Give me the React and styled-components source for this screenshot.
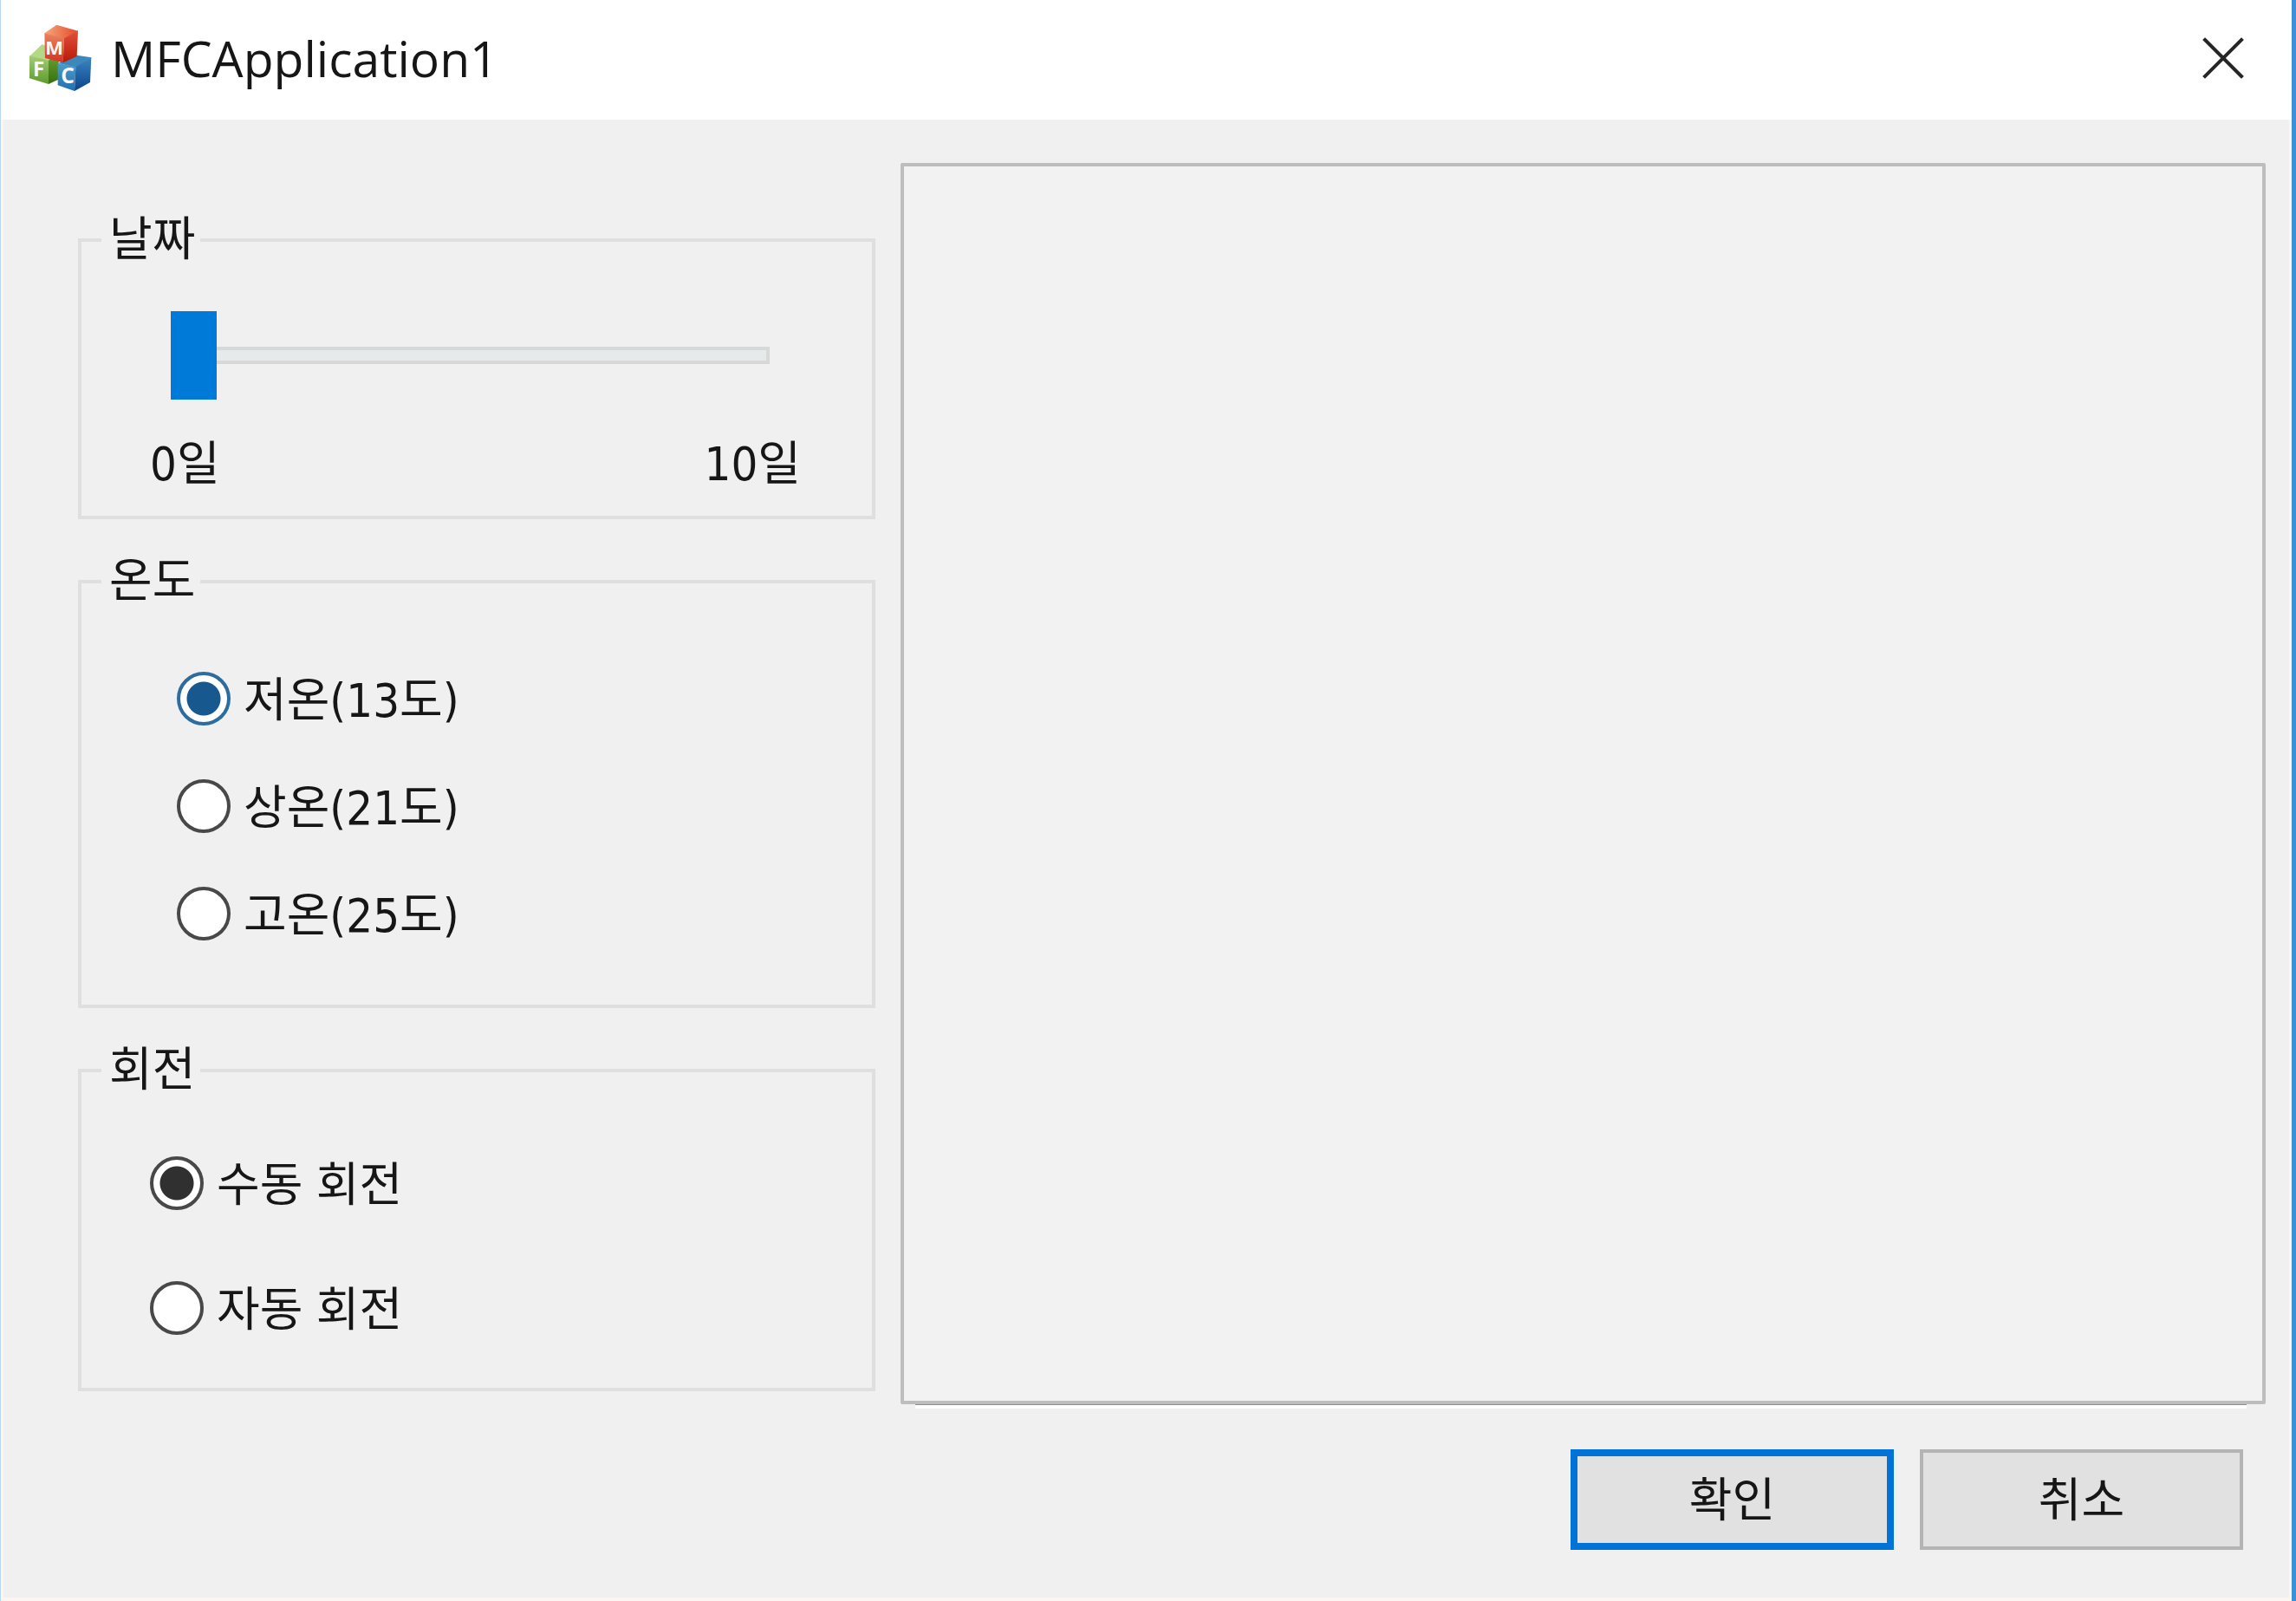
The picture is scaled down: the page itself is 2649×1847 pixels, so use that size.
import React, { useState } from "react";
import styled, { createGlobalStyle } from "styled-components";

const GlobalStyle = createGlobalStyle`
  *, *::before, *::after { box-sizing: border-box; }
  body {
    margin: 0;
    background: #f0f0f0;
    color: #161616;
    font-family: "DejaVu Sans Condensed", "Noto Sans CJK KR", sans-serif;
    font-size: 54px;
  }
`;

const Window = styled.div`
  min-height: 100vh;
  display: flex;
  flex-direction: column;
  border-left: 1px solid #b9d8f5;
  border-right: 5px solid #3a91da;
`;

const TitleBar = styled.header`
  height: 138px;
  display: flex;
  align-items: center;
  gap: 16px;
  padding: 0 29px 4px 27px;
  background: #ffffff;
`;

const Title = styled.h1`
  flex: 1;
  margin: 0;
  font-family: "Open Sans", "Noto Sans", sans-serif;
  font-size: 57px;
  font-weight: 400;
  line-height: 76px;
`;

const CloseButton = styled.button`
  display: flex;
  align-items: center;
  justify-content: center;
  width: 100px;
  height: 100px;
  padding: 0;
  border: 0;
  background: none;
`;

const Client = styled.main`
  flex: 1;
  display: flex;
  flex-direction: column;
  padding-top: 50px;
  background: #f0f0f0;
  border: solid #fcf6ee;
  border-width: 0 3px 4px;
`;

const Columns = styled.div`
  display: grid;
  grid-template-columns: minmax(0, 920fr) minmax(0, 1575fr);
  gap: 29px;
  padding: 0 27px 0 86px;
`;

const Settings = styled.div`
  display: flex;
  flex-direction: column;
  gap: 40px;
  padding: 57px 0 15px;
`;

const Group = styled.fieldset`
  min-width: 0;
  margin: 0;
  padding: 0;
  border: 4px solid #dfdfdf;
`;

const GroupTitle = styled.legend`
  margin-left: 23px;
  padding: 0 6px 0 9px;
  line-height: 64px;
`;

const SliderArea = styled.div`
  padding: 50px 118px 0 103px;
`;

const Slider = styled.input`
  appearance: none;
  display: block;
  width: 100%;
  height: 102px;
  margin: 0;
  background: none;

  &::-webkit-slider-runnable-track {
    height: 20px;
    background: #e7eaea;
    box-shadow: inset 0 0 0 4px #d7d9d9;
  }

  &::-webkit-slider-thumb {
    appearance: none;
    width: 53px;
    height: 102px;
    margin-top: -41px;
    border-radius: 0;
    background: #007ad9;
  }
`;

const Range = styled.div`
  display: flex;
  justify-content: space-between;
  padding: 40px 82px 30px 79px;
`;

const Caption = styled.span`
  padding-top: 6px;
  line-height: 58px;
`;

const Options = styled.div`
  display: flex;
  flex-direction: column;
  align-items: flex-start;
  gap: ${(p) => p.$gap}px;
  padding: ${(p) => p.$padding};
`;

const Option = styled.label`
  display: flex;
  align-items: center;
  gap: 15px;
`;

const Radio = styled.input`
  appearance: none;
  width: 62px;
  height: 62px;
  margin: 0;
  border: 4px solid ${(p) => (p.$accent && p.checked ? "#2c6c9f" : "#484848")};
  border-radius: 50%;
  background: #ffffff;

  &:checked {
    background: radial-gradient(
      circle,
      ${(p) => (p.$accent ? "#17588f" : "#303030")} 19px,
      #ffffff 20px
    );
  }
`;

const Canvas = styled.section`
  position: relative;
  border: 4px solid #bdbdbd;
  border-radius: 2px;
  background: #f2f2f2;

  &::after {
    content: "";
    position: absolute;
    top: calc(100% + 4px);
    left: 13px;
    right: 18px;
    height: 5px;
    border-top: 1px solid #8f8f8f;
    background: #ffffff;
  }
`;

const Actions = styled.footer`
  display: flex;
  justify-content: flex-end;
  gap: 30px;
  padding: 52px 53px 48px;
`;

const Button = styled.button`
  width: 373px;
  height: 116px;
  padding: 4px 0 0;
  border: ${(p) => (p.$primary ? "8px solid #0072d8" : "4px solid #b4b4b4")};
  background: #e1e1e1;
  color: inherit;
  font: inherit;
  line-height: 64px;
`;

function AppIcon() {
  return (
    <svg width="84" height="88" viewBox="0 0 252 264" aria-hidden="true">
      <defs>
        <linearGradient id="redTop" x1="0" y1="0" x2="1" y2="0">
          <stop offset="0" stopColor="#f6a878" />
          <stop offset="1" stopColor="#e2492c" />
        </linearGradient>
        <linearGradient id="redFront" x1="0" y1="0" x2="0" y2="1">
          <stop offset="0" stopColor="#ec8460" />
          <stop offset="1" stopColor="#d43320" />
        </linearGradient>
        <linearGradient id="redSide" x1="0" y1="0" x2="0" y2="1">
          <stop offset="0" stopColor="#e0503a" />
          <stop offset="1" stopColor="#b81808" />
        </linearGradient>
        <linearGradient id="greenFront" x1="0" y1="0" x2="0" y2="1">
          <stop offset="0" stopColor="#a4cc78" />
          <stop offset="1" stopColor="#5c9a2c" />
        </linearGradient>
        <linearGradient id="greenSide" x1="0" y1="0" x2="0" y2="1">
          <stop offset="0" stopColor="#6ba53a" />
          <stop offset="1" stopColor="#36700f" />
        </linearGradient>
        <linearGradient id="blueFront" x1="0" y1="0" x2="0" y2="1">
          <stop offset="0" stopColor="#4a9ccc" />
          <stop offset="1" stopColor="#2270b0" />
        </linearGradient>
        <linearGradient id="blueSide" x1="0" y1="0" x2="0" y2="1">
          <stop offset="0" stopColor="#3b86bf" />
          <stop offset="1" stopColor="#0b438c" />
        </linearGradient>
      </defs>
      <path d="M18 126 L62 84 L116 110 L84 142 Z" fill="#b4d884" />
      <path d="M18 124 L84 140 L84 222 L18 202 Z" fill="url(#greenFront)" />
      <path d="M84 140 L120 112 L118 206 L84 222 Z" fill="url(#greenSide)" />
      <path d="M118 150 L166 120 L232 130 L178 164 Z" fill="#3b88bd" />
      <path d="M116 150 L178 162 L174 246 L116 226 Z" fill="url(#blueFront)" />
      <path d="M178 162 L232 129 L228 216 L174 246 Z" fill="url(#blueSide)" />
      <path d="M70 46 L112 17 L186 38 L138 66 Z" fill="url(#redTop)" />
      <path d="M70 45 L138 64 L134 148 L72 132 Z" fill="url(#redFront)" />
      <path d="M138 64 L186 37 L182 126 L134 148 Z" fill="url(#redSide)" />
      <g
        fill="#fff8f2"
        fontFamily="Open Sans, sans-serif"
        fontWeight="700"
        textAnchor="middle"
      >
        <text x="104" y="120" fontSize="66">M</text>
        <text x="50" y="194" fontSize="72">F</text>
        <text x="150" y="218" fontSize="74">C</text>
      </g>
    </svg>
  );
}

function CloseIcon() {
  return (
    <svg width="48" height="48" viewBox="0 0 48 48" aria-hidden="true">
      <path
        d="M3 3 L45 45 M45 3 L3 45"
        stroke="#262626"
        strokeWidth="4"
        strokeLinecap="square"
      />
    </svg>
  );
}

function RadioGroup({ title, name, options, accent, gap, padding }) {
  const [selected, setSelected] = useState(options[0]);
  return (
    <Group>
      <GroupTitle>{title}</GroupTitle>
      <Options $gap={gap} $padding={padding}>
        {options.map((option) => (
          <Option key={option}>
            <Radio
              type="radio"
              name={name}
              $accent={accent}
              checked={selected === option}
              onChange={() => setSelected(option)}
            />
            <Caption>{option}</Caption>
          </Option>
        ))}
      </Options>
    </Group>
  );
}

export default function App() {
  const [day, setDay] = useState(0);
  return (
    <>
      <GlobalStyle />
      <Window>
        <TitleBar>
          <AppIcon />
          <Title>MFCApplication1</Title>
          <CloseButton type="button" aria-label="닫기">
            <CloseIcon />
          </CloseButton>
        </TitleBar>
        <Client>
          <Columns>
            <Settings>
              <Group>
                <GroupTitle id="day-title">날짜</GroupTitle>
                <SliderArea>
                  <Slider
                    type="range"
                    min="0"
                    max="10"
                    value={day}
                    aria-labelledby="day-title"
                    onChange={(e) => setDay(Number(e.target.value))}
                  />
                </SliderArea>
                <Range>
                  <Caption>0일</Caption>
                  <Caption>10일</Caption>
                </Range>
              </Group>
              <RadioGroup
                title="온도"
                name="temperature"
                options={["저온(13도)", "상온(21도)", "고온(25도)"]}
                accent
                gap={60}
                padding="71px 0 73px 110px"
              />
              <RadioGroup
                title="회전"
                name="rotation"
                options={["수동 회전", "자동 회전"]}
                gap={80}
                padding="66px 0 60px 79px"
              />
            </Settings>
            <Canvas />
          </Columns>
          <Actions>
            <Button type="submit" $primary>
              확인
            </Button>
            <Button type="button">취소</Button>
          </Actions>
        </Client>
      </Window>
    </>
  );
}
